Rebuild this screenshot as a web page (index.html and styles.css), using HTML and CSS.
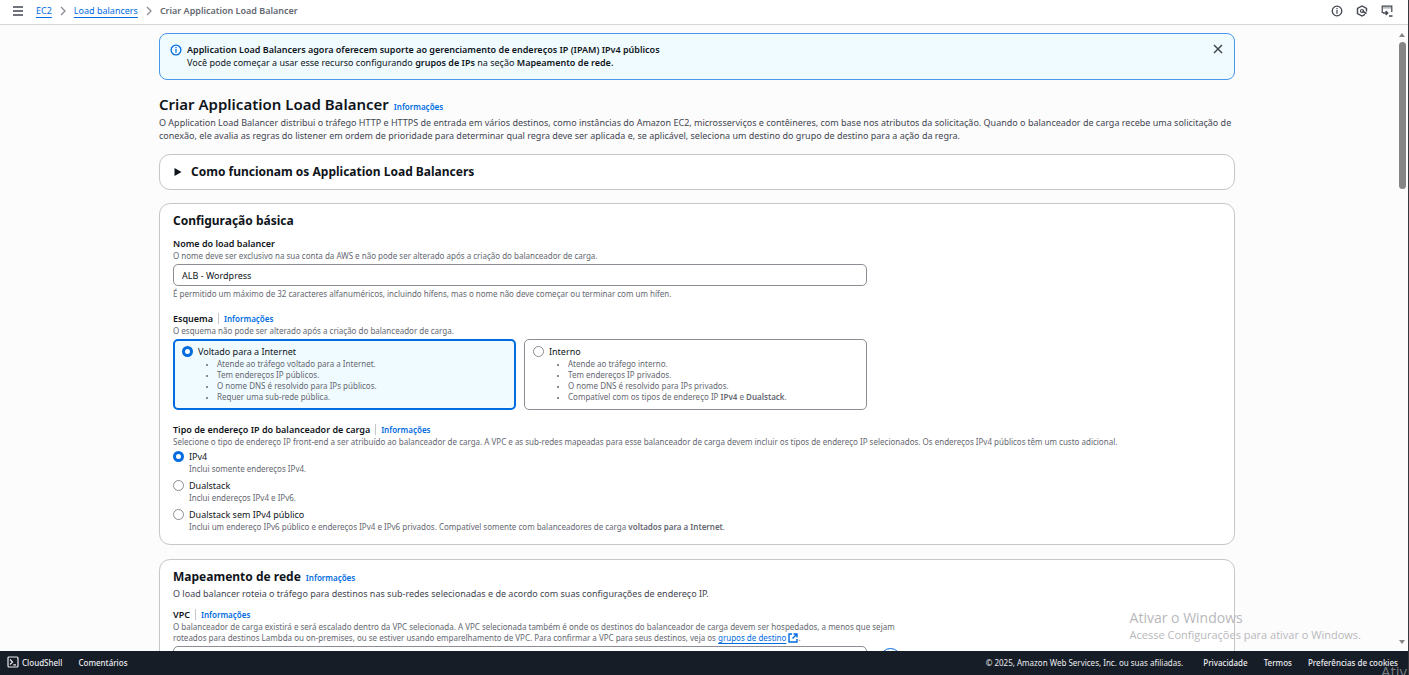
FILE: index.html
```html
<!DOCTYPE html>
<html lang="pt-BR">
<head>
<meta charset="utf-8">
<title>Criar Application Load Balancer</title>
<link rel="stylesheet" href="styles.css">
</head>
<body>
<header class="topbar">
  <button class="icon-button" aria-label="Abrir navegação"><svg width="12" height="12" viewBox="0 0 12 12"><path d="M1 2h10M1 6h10M1 10h10" stroke-width="1.7"/></svg></button>
  <nav class="breadcrumbs" aria-label="Trilha">
    <a href="#ec2">EC2</a>
    <svg width="6" height="10" viewBox="0 0 6 10"><path d="M1 1l4 4-4 4" stroke-width="1.3"/></svg>
    <a href="#load-balancers">Load balancers</a>
    <svg width="6" height="10" viewBox="0 0 6 10"><path d="M1 1l4 4-4 4" stroke-width="1.3"/></svg>
    <span class="current">Criar Application Load Balancer</span>
  </nav>
  <div class="tools">
    <button class="icon-button" aria-label="Informações"><svg width="12" height="12" viewBox="0 0 12 12"><circle cx="6" cy="6" r="4.8" stroke-width="1.3"/><path d="M6 5v3.8M6 3v1.2" stroke-width="1.2"/></svg></button>
    <button class="icon-button" aria-label="Diagnóstico"><svg width="12" height="12" viewBox="0 0 12 12"><path d="M10.500 6.500V3.500L6 1 1.500 3.500v5L6 11l3-1.600" stroke-width="1.400"/><circle cx="6" cy="6" r="1.500" stroke-width="1.200"/><path d="M6.500 6.200l4 2.300" stroke-width="1.600"/></svg></button>
    <button class="icon-button" aria-label="Painel CloudShell"><svg width="12" height="12" viewBox="0 0 12 12"><path d="M2.500 7.500H1.200V1.200h9.600V7" stroke-width="1.200"/><path d="M2.500 2.800h7" stroke-width="1.200" stroke-dasharray="1 1"/><path d="M2 8H6.500M4.700 6l2 2-2 2M8 11h3.500" stroke-width="1.400"/></svg></button>
  </div>
</header>

<div class="viewport">
  <main class="page">
    <div class="content">
      <section class="flash">
        <svg class="blue" width="12" height="12" viewBox="0 0 12 12"><circle cx="6" cy="6" r="4.900" stroke-width="1.300"/><path d="M6 5v3.800M6 3v1.200" stroke-width="1.200"/></svg>
        <div class="flash-text">
          <strong>Application Load Balancers agora oferecem suporte ao gerenciamento de endereços IP (IPAM) IPv4 públicos</strong>
          <p>Você pode começar a usar esse recurso configurando <b>grupos de IPs</b> na seção <b>Mapeamento de rede.</b></p>
        </div>
        <button class="icon-button" aria-label="Fechar"><svg width="12" height="12" viewBox="0 0 12 12"><path d="M2 2l8 8M10 2l-8 8" stroke-width="1.500"/></svg></button>
      </section>

      <div class="title">
        <h1>Criar Application Load Balancer</h1><a class="info" href="#info">Informações</a>
      </div>
      <p class="lead">O Application Load Balancer distribui o tráfego HTTP e HTTPS de entrada em vários destinos, como instâncias do Amazon EC2, microsserviços e contêineres, com base nos atributos da solicitação. Quando o balanceador de carga recebe uma solicitação de<br>conexão, ele avalia as regras do listener em ordem de prioridade para determinar qual regra deve ser aplicada e, se aplicável, seleciona um destino do grupo de destino para a ação da regra.</p>

      <section class="card expander">
        <button class="expander-toggle" aria-expanded="false"><svg width="8" height="10" viewBox="0 0 8 10"><path class="solid" d="M.5 1l7 4-7 4z"/></svg>Como funcionam os Application Load Balancers</button>
      </section>

      <section class="card">
        <h2>Configuração básica</h2>
        <div class="field">
          <label class="name" for="lb-name">Nome do load balancer</label>
          <p class="help">O nome deve ser exclusivo na sua conta da AWS e não pode ser alterado após a criação do balanceador de carga.</p>
          <input class="text-input" id="lb-name" type="text" value="ALB - Wordpress">
          <p class="help">É permitido um máximo de 32 caracteres alfanuméricos, incluindo hífens, mas o nome não deve começar ou terminar com um hífen.</p>
        </div>

        <div class="field">
          <div class="name-row"><span class="name">Esquema</span><a class="info divided" href="#esquema">Informações</a></div>
          <p class="help">O esquema não pode ser alterado após a criação do balanceador de carga.</p>
          <div class="tiles">
            <div class="tile selected">
              <input type="radio" name="scheme" id="public" checked>
              <div>
                <label for="public">Voltado para a Internet</label>
                <ul>
                  <li>Atende ao tráfego voltado para a Internet.</li>
                  <li>Tem endereços IP públicos.</li>
                  <li>O nome DNS é resolvido para IPs públicos.</li>
                  <li>Requer uma sub-rede pública.</li>
                </ul>
              </div>
            </div>
            <div class="tile">
              <input type="radio" name="scheme" id="internal">
              <div>
                <label for="internal">Interno</label>
                <ul>
                  <li>Atende ao tráfego interno.</li>
                  <li>Tem endereços IP privados.</li>
                  <li>O nome DNS é resolvido para IPs privados.</li>
                  <li>Compatível com os tipos de endereço IP <b>IPv4</b> e <b>Dualstack</b>.</li>
                </ul>
              </div>
            </div>
          </div>
        </div>

        <div class="field">
          <div class="name-row"><span class="name">Tipo de endereço IP do balanceador de carga</span><a class="info divided" href="#tipo-ip">Informações</a></div>
          <p class="help">Selecione o tipo de endereço IP front-end a ser atribuído ao balanceador de carga. A VPC e as sub-redes mapeadas para esse balanceador de carga devem incluir os tipos de endereço IP selecionados. Os endereços IPv4 públicos têm um custo adicional.</p>
          <div class="options">
            <div class="option">
              <input type="radio" name="ip" id="ipv4" checked>
              <div><label for="ipv4">IPv4</label><p class="help">Inclui somente endereços IPv4.</p></div>
            </div>
            <div class="option">
              <input type="radio" name="ip" id="dual">
              <div><label for="dual">Dualstack</label><p class="help">Inclui endereços IPv4 e IPv6.</p></div>
            </div>
            <div class="option">
              <input type="radio" name="ip" id="dual-private">
              <div><label for="dual-private">Dualstack sem IPv4 público</label><p class="help">Inclui um endereço IPv6 público e endereços IPv4 e IPv6 privados. Compatível somente com balanceadores de carga <b>voltados para a Internet</b>.</p></div>
            </div>
          </div>
        </div>
      </section>

      <section class="card">
        <div class="title"><h2>Mapeamento de rede</h2><a class="info" href="#rede">Informações</a></div>
        <p class="lead">O load balancer roteia o tráfego para destinos nas sub-redes selecionadas e de acordo com suas configurações de endereço IP.</p>
        <div class="field">
          <div class="name-row"><label class="name" for="vpc">VPC</label><a class="info divided" href="#vpc-info">Informações</a></div>
          <p class="help">O balanceador de carga existirá e será escalado dentro da VPC selecionada. A VPC selecionada também é onde os destinos do balanceador de carga devem ser hospedados, a menos que sejam<br>roteados para destinos Lambda ou on-premises, ou se estiver usando emparelhamento de VPC. Para confirmar a VPC para seus destinos, veja os <a class="text-link" href="#grupos">grupos de destino</a> <svg class="blue external" width="10" height="10" viewBox="0 0 10 10"><path d="M4 1H1v8h8V6M5.500 1H9v3.500M9 1L4.500 5.500" stroke-width="1.400"/></svg>.</p>
          <div class="vpc-row">
            <select class="text-input" id="vpc"><option></option></select>
            <button class="refresh" aria-label="Atualizar"></button>
          </div>
        </div>
      </section>
    </div>
  </main>
  <div class="scrollbar" aria-hidden="true">
    <svg width="8" height="6" viewBox="0 0 8 6"><path class="solid" d="M1 5l3-4 3 4z"/></svg>
    <div class="thumb"></div>
    <svg width="8" height="6" viewBox="0 0 8 6"><path class="solid" d="M1 1l3 4 3-4z"/></svg>
  </div>
</div>

<footer class="footer">
  <button><svg width="12" height="12" viewBox="0 0 12 12"><rect x="1" y="1" width="10" height="10" rx="1" stroke-width="1.200"/><path d="M3 3.500L5.500 6 3 8.500M6.300 8.800H9" stroke-width="1.200"/></svg>CloudShell</button>
  <button>Comentários</button>
  <span class="copyright">© 2025, Amazon Web Services, Inc. ou suas afiliadas.</span>
  <a href="#privacidade">Privacidade</a>
  <a href="#termos">Termos</a>
  <button>Preferências de cookies</button>
</footer>

<div class="watermark"><p class="watermark-title">Ativar o Windows</p><p>Acesse Configurações para ativar o Windows.</p></div>
<div class="watermark-cut" aria-hidden="true">Ativ</div>
</body>
</html>
```
FILE: styles.css
```css
* { box-sizing: border-box; }
body {
  margin: 0;
  height: 100vh;
  display: flex;
  flex-direction: column;
  overflow: hidden;
  background: #fcfcfd;
  border-right: 1px solid #35383d;
  color: #0f141a;
  font: 9px/13px "Noto Sans", sans-serif;
}
p, h1, h2, ul { margin: 0; }
b, strong { font-weight: 600; }
button, input, select { font: inherit; color: inherit; }
button { border: 0; padding: 0; background: none; }
a { color: #006ce0; }
svg { fill: none; stroke: currentColor; flex: none; display: block; }
.solid { fill: currentColor; stroke: none; }
.blue { color: #006ce0; }

.topbar {
  flex: none;
  display: flex;
  align-items: center;
  height: 25px;
  padding: 0 15px 3px 12px;
  background: #fff;
  border-bottom: 1px solid #d5d7db;
}
.icon-button { color: #424650; }
.breadcrumbs {
  display: flex;
  align-items: center;
  gap: 8px;
  margin-left: 12px;
  color: #8c8c94;
}
.breadcrumbs a { text-underline-offset: 3px; }
.current { color: #656871; font-weight: 600; }
.tools { display: flex; gap: 13px; margin-left: auto; }

.viewport { flex: 1; min-height: 0; display: flex; }
.page { flex: 1; min-width: 0; overflow: hidden; }
.content { max-width: 1076px; margin: 0 auto; padding-top: 8px; }
.scrollbar {
  display: flex;
  flex-direction: column;
  align-items: center;
  width: 14px;
  padding: 7px 0 6px 2px;
  color: #858585;
}
.thumb {
  width: 7px;
  height: 24%;
  margin: 4px 0 auto;
  border-radius: 4px;
  background: #858585;
}

.flash {
  display: flex;
  align-items: flex-start;
  gap: 5px;
  min-height: 47px;
  padding: 9px 10px;
  border: 1px solid #4a98ea;
  border-radius: 8px;
  background: #f0fbff;
}
.flash > svg { margin-top: 1px; }
.flash-text { flex: 1; }
.title { display: flex; align-items: baseline; gap: 5px; }
h1 { font-size: 15px; line-height: 20px; font-weight: 600; }
h2 { font-size: 12px; line-height: 16px; font-weight: 700; }
.flash + .title { margin-top: 14px; }
.info { font-size: 8px; line-height: 11px; font-weight: 600; text-decoration: none; }
.lead { color: #424650; margin-top: 2px; }

.card {
  margin-top: 14px;
  padding: 9px 13px 12px;
  border: 1px solid #c6c6cd;
  border-radius: 11px;
  background: #fff;
}
.lead + .card { margin-top: 12px; }
.card.expander { padding: 9px 14px; }
.expander + .card { margin-top: 13px; }
.expander-toggle {
  display: flex;
  align-items: center;
  gap: 9px;
  font-size: 12px;
  line-height: 16px;
  font-weight: 700;
}
.field { margin-top: 8px; }
.field + .field { margin-top: 13px; }
.name { font-weight: 600; }
.name-row { display: flex; align-items: center; gap: 5px; }
.divided { padding-left: 5px; border-left: 1px solid #c6c6cd; }
.help { color: #656871; font-size: 8px; line-height: 11px; }
.text-input {
  display: block;
  width: 694px;
  max-width: 100%;
  height: 22px;
  margin: 3px 0 2px;
  padding: 0 8px;
  border: 1px solid #8c8c94;
  border-radius: 5px;
  background: #fff;
  appearance: none;
}
.tiles { display: grid; grid-template-columns: 1fr 1fr; gap: 8px; max-width: 694px; margin-top: 3px; }
.tile {
  display: flex;
  gap: 5px;
  padding: 5px 8px 7px;
  border: 1px solid #8c8c94;
  border-radius: 5px;
}
.selected { border: 2px solid #006ce0; background: #f0fbff; padding: 4px 7px 6px; }
ul { padding-left: 19px; color: #656871; font-size: 8px; line-height: 11px; }
li::marker { font-size: 6px; }
input[type="radio"] {
  appearance: none;
  flex: none;
  width: 11px;
  height: 11px;
  margin: 1px 0 0;
  border: 1px solid #8c8c94;
  border-radius: 50%;
  background: #fff;
}
input[type="radio"]:checked { border: 3px solid #006ce0; }
.options { display: grid; gap: 5px; margin-top: 3px; }
.option { display: flex; gap: 5px; }
.text-link { text-underline-offset: 2px; }
.external { display: inline-block; vertical-align: -2px; }
.vpc-row { display: flex; gap: 13px; }
.refresh { width: 21px; height: 21px; margin-top: 5px; border: 1px solid #006ce0; border-radius: 50%; }

.footer {
  flex: none;
  display: flex;
  align-items: center;
  gap: 16px;
  height: 24px;
  padding: 0 10px 2px 7px;
  background: #161d26;
  color: #ebebf0;
  font-size: 8px;
  line-height: 11px;
  font-weight: 500;
}
.footer button { display: flex; align-items: center; gap: 3px; }
.footer a { color: inherit; text-decoration: none; }
.copyright { margin: 0 4px 0 auto; font-weight: 400; }

.watermark {
  position: absolute;
  right: 48px;
  bottom: 33px;
  color: #b8b8bb;
  font: 11px/15px "Open Sans", sans-serif;
}
.watermark-title { font-size: 14px; line-height: 18px; }
.watermark-cut {
  position: absolute;
  right: 0;
  bottom: 0;
  width: 28px;
  height: 13px;
  overflow: hidden;
  color: #777c82;
  font: 15px/18px "Open Sans", sans-serif;
}
```
